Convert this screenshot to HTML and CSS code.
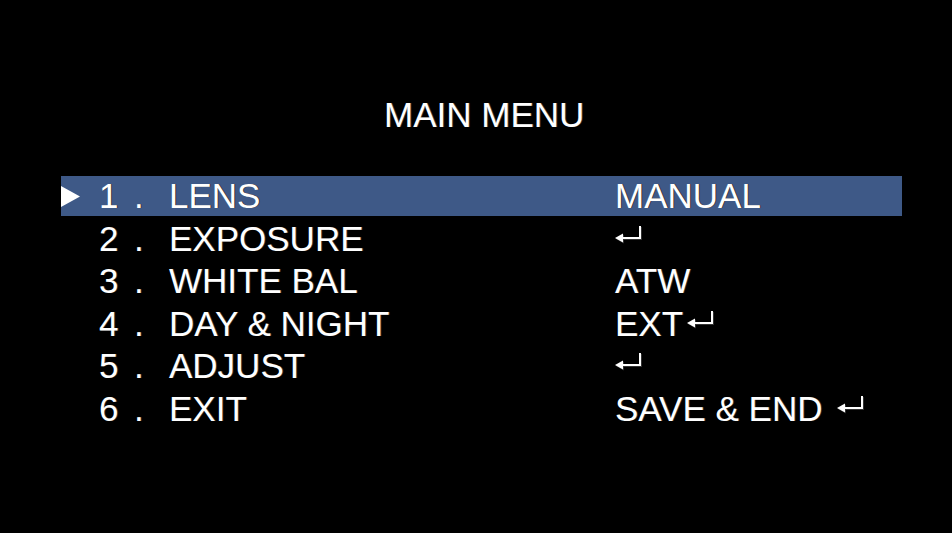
FILE: index.html
```html
<!DOCTYPE html>
<html>
<head>
<meta charset="utf-8">
<link rel="stylesheet" href="styles.css">
</head>
<body>
<div class="osd">
  <div class="title">MAIN MENU</div>
  <div class="menu">
    <div class="row selected">
      <span class="marker"><svg width="19" height="21" viewBox="0 0 19 21"><polygon points="0,0 19,10.5 0,21" fill="#fff"/></svg></span>
      <span class="num">1</span><span class="dot">.</span>
      <span class="label">LENS</span>
      <span class="value">MANUAL</span>
    </div>
    <div class="row">
      <span class="marker"></span>
      <span class="num">2</span><span class="dot">.</span>
      <span class="label">EXPOSURE</span>
      <span class="value"><svg class="enter" width="28" height="18" viewBox="0 0 28 18"><path d="M25 1 V13 H6" fill="none" stroke="#fff" stroke-width="2"/><polygon points="0,13 8,8.5 8,17.5" fill="#fff"/></svg></span>
    </div>
    <div class="row">
      <span class="marker"></span>
      <span class="num">3</span><span class="dot">.</span>
      <span class="label">WHITE BAL</span>
      <span class="value">ATW</span>
    </div>
    <div class="row">
      <span class="marker"></span>
      <span class="num">4</span><span class="dot">.</span>
      <span class="label">DAY &amp; NIGHT</span>
      <span class="value">EXT<svg class="enter tight" width="28" height="18" viewBox="0 0 28 18"><path d="M25 1 V13 H6" fill="none" stroke="#fff" stroke-width="2"/><polygon points="0,13 8,8.5 8,17.5" fill="#fff"/></svg></span>
    </div>
    <div class="row">
      <span class="marker"></span>
      <span class="num">5</span><span class="dot">.</span>
      <span class="label">ADJUST</span>
      <span class="value"><svg class="enter" width="28" height="18" viewBox="0 0 28 18"><path d="M25 1 V13 H6" fill="none" stroke="#fff" stroke-width="2"/><polygon points="0,13 8,8.5 8,17.5" fill="#fff"/></svg></span>
    </div>
    <div class="row">
      <span class="marker"></span>
      <span class="num">6</span><span class="dot">.</span>
      <span class="label">EXIT</span>
      <span class="value">SAVE &amp; END<svg class="enter spaced" width="28" height="18" viewBox="0 0 28 18"><path d="M25 1 V13 H6" fill="none" stroke="#fff" stroke-width="2"/><polygon points="0,13 8,8.5 8,17.5" fill="#fff"/></svg></span>
    </div>
  </div>
</div>
</body>
</html>
```

FILE: styles.css
```css
html, body {
  margin: 0;
  padding: 0;
  background: #000;
}
body {
  width: 952px;
  height: 533px;
  overflow: hidden;
  font-family: "Liberation Sans", Arial, sans-serif;
  font-size: 35px;
  color: #fff;
}
.osd {
  padding-top: 95px;
  display: flex;
  flex-direction: column;
}
.title {
  line-height: 40px;
  height: 40px;
  padding-left: 384px;
  text-shadow: 1px 0 0 #3a3a3a;
}
.menu {
  margin-top: 41px;
  margin-left: 61px;
  width: 841px;
  display: flex;
  flex-direction: column;
  gap: 2.6px;
}
.row {
  height: 40px;
  line-height: 40px;
  display: grid;
  grid-template-columns: 38px 35px 35px 446px 1fr;
  white-space: nowrap;
  text-shadow: 1px 0 0 #333;
}
.row.selected {
  background: #3e5987;
}
.marker {
  display: flex;
  align-items: center;
}
.marker svg {
  display: block;
}
.enter {
  vertical-align: 8px;
  filter: drop-shadow(1px 1px 0 #333);
}
.enter.tight {
  margin-left: 4px;
}
.enter.spaced {
  margin-left: 15px;
}
```
